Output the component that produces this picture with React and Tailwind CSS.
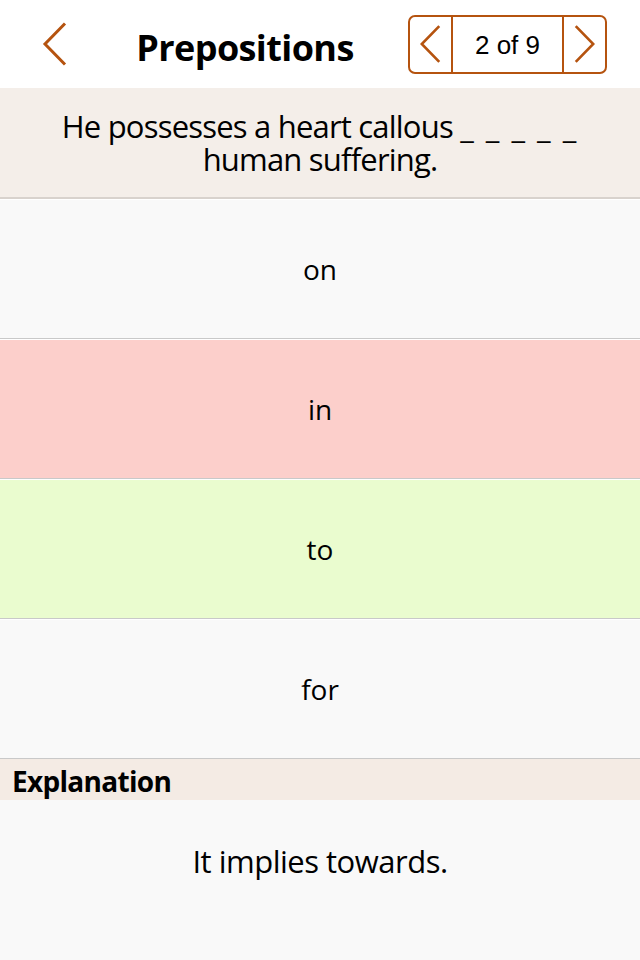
const ORANGE = '#b5530f';

const Chevron = ({ dir = 'left', className = '' }) => (
  <svg viewBox="0 0 24 44" className={className} fill="none">
    <path
      d={dir === 'left' ? 'M22 1.5 L2 22 L22 42.5' : 'M2 1.5 L22 22 L2 42.5'}
      stroke={ORANGE}
      strokeWidth="3"
      strokeLinecap="butt"
      strokeLinejoin="miter"
    />
  </svg>
);

const OPTIONS = [
  { label: 'on', bg: 'bg-[#f9f9f9]' },
  { label: 'in', bg: 'bg-[#fccfcb]' },
  { label: 'to', bg: 'bg-[#eafccf]' },
  { label: 'for', bg: 'bg-[#f9f9f9]' },
];

const App = () => {
  return (
    <div className="flex h-[960px] w-[640px] flex-col overflow-hidden bg-[#f9f9f9] font-['Open_Sans',sans-serif] text-black">
      {/* Header */}
      <div className="flex h-[88px] shrink-0 items-center bg-white">
        <div className="flex w-[100px] justify-start pl-[42px]">
          <Chevron className="h-[44px] w-[26px]" />
        </div>
        <h1 className="flex-1 pt-[8px] pr-[18px] text-center text-[36px] font-bold tracking-[-0.6px]">Prepositions</h1>
        <div className="mr-[33px] flex h-[59px] w-[199px] items-stretch rounded-[7px] border-2 border-[#b5530f]">
          <button className="flex w-[41px] items-center justify-center">
            <Chevron className="h-[42px] w-[21px]" />
          </button>
          <div className="flex flex-1 items-center justify-center border-x-2 border-[#b5530f] pt-[2px] font-['Liberation_Sans',sans-serif] text-[26px]">
            2 of 9
          </div>
          <button className="flex w-[41px] items-center justify-center">
            <Chevron dir="right" className="h-[42px] w-[21px]" />
          </button>
        </div>
      </div>

      {/* Question */}
      <div className="flex h-[111px] shrink-0 flex-col items-center justify-center border-b-2 border-[#d8d2cd] bg-[#f4eee9] text-center text-[31px] leading-[33px] tracking-[-0.8px]">
        <p>
          He possesses a heart callous <span className="tracking-[2px]">_ _ _ _ _</span>
        </p>
        <p>human suffering.</p>
      </div>

      {/* Options */}
      {OPTIONS.map((opt) => (
        <div
          key={opt.label}
          className={`flex h-[140px] shrink-0 items-center justify-center border-t border-white ${opt.bg} border-b border-b-[#c9c9c9] text-[28px]`}
        >
          {opt.label}
        </div>
      ))}

      {/* Explanation */}
      <div className="flex h-[41px] shrink-0 items-center bg-[#f4ebe4] pl-[12px] pt-[3px] text-[28px] font-bold tracking-[-0.7px]">
        Explanation
      </div>
      <div className="flex justify-center pt-[38px] text-[31px] tracking-[-0.5px]">It implies towards.</div>
    </div>
  );
};

export default App;
